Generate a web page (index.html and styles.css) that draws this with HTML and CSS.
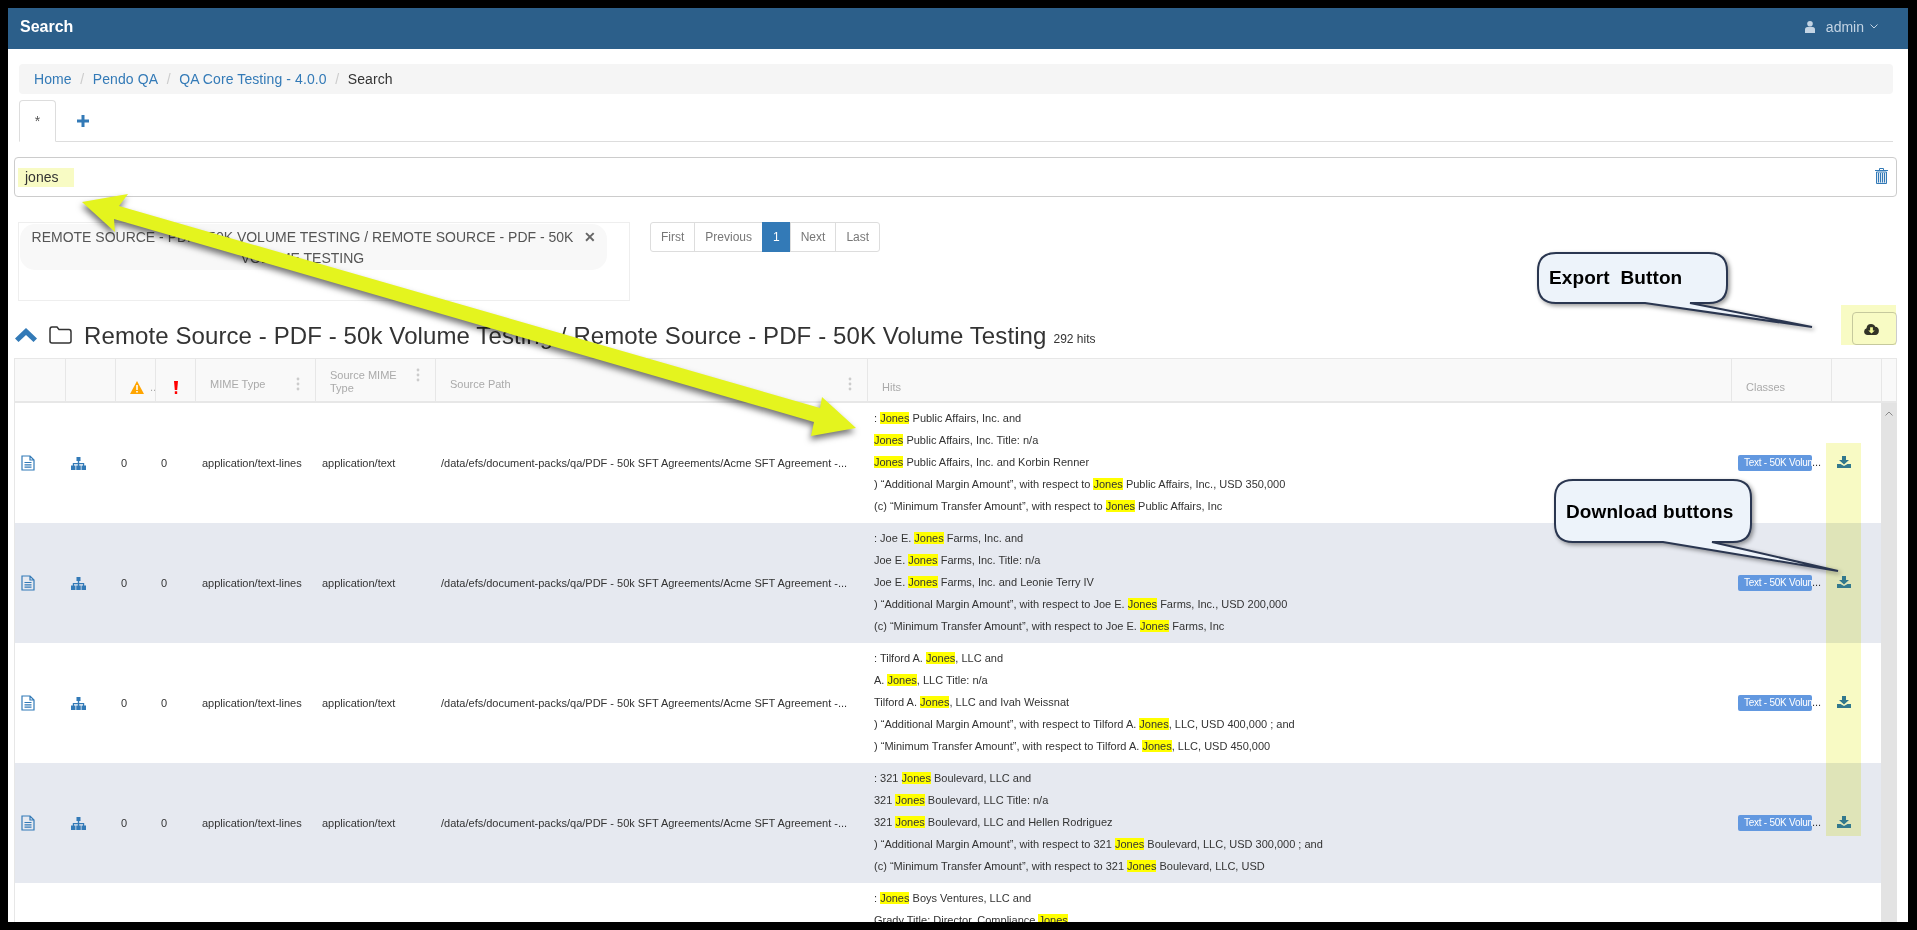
FILE: index.html
```html
<!DOCTYPE html>
<html lang="en">

<head>
    <meta charset="UTF-8">
    <title>Search</title>
    <link rel="stylesheet" href="styles.css">
</head>

<body>
    <svg class="defs" width="0" height="0">
        <defs>
            <symbol id="file" viewBox="0 0 14 16">
                <path d="M1 1h8l4 4v10H1z M9 1v4h4" fill="none" stroke="currentColor" stroke-width="1.2" />
                <path d="M3.500 7.500h7M3.500 9.800h7M3.500 12.100h7" fill="none" stroke="currentColor" stroke-width="1.2" />
            </symbol>
            <symbol id="sitemap" viewBox="0 0 15 13">
                <path d="M5.500 0h4v4h-1.300v2h5v3h-1.200V7.200H8.200V9H6.800V7.200H3V9H1.800V6h5V4H5.500z" fill="currentColor" />
                <path d="M0 8.500h4.500V13H0zM5.250 8.500h4.500V13h-4.500zM10.500 8.500H15V13h-4.500z" fill="currentColor" />
            </symbol>
            <symbol id="download" viewBox="0 0 14 12">
                <path d="M5 0h4v4h3L7 8.500 2 4h3z" fill="currentColor" />
                <path d="M0 8h3.500L7 10l3.500-2H14v4H0z" fill="currentColor" />
            </symbol>
            <symbol id="kebab" viewBox="0 0 4 14">
                <circle cx="2" cy="2" r="1.400" fill="#ccc" />
                <circle cx="2" cy="7" r="1.400" fill="#ccc" />
                <circle cx="2" cy="12" r="1.400" fill="#ccc" />
            </symbol>
        </defs>
    </svg>

    <div class="app">
        <header class="navbar">
            <span class="page-title">Search</span>
            <span class="user-menu">
                <svg class="icon-user" viewBox="0 0 10 12">
                    <circle cx="5" cy="2.800" r="2.800" fill="currentColor" />
                    <path d="M0 12V8.500Q0 6 2.500 6h5Q10 6 10 8.500V12z" fill="currentColor" />
                </svg>
                admin
                <svg class="icon-caret" viewBox="0 0 8 5">
                    <path d="M.5.500 4 4 7.500.500" fill="none" stroke="currentColor" />
                </svg>
            </span>
        </header>

        <ol class="breadcrumb">
            <li><a href="#">Home</a></li>
            <li><a href="#">Pendo QA</a></li>
            <li><a href="#">QA Core Testing - 4.0.0</a></li>
            <li class="active">Search</li>
        </ol>

        <div class="tabs">
            <span class="tab">*</span>
            <svg class="icon-plus" viewBox="0 0 12 12">
                <path d="M4.500 0h3v4.500H12v3H7.500V12h-3V7.500H0v-3h4.500z" fill="currentColor" />
            </svg>
        </div>

        <div class="search-box">
            <span class="search-term">jones</span>
            <svg class="icon-trash" viewBox="0 0 13 16">
                <path d="M4.500 2V.5h4V2M0 2.500h13" fill="none" stroke="#337ab7" />
                <path d="M1.500 4h10v11.500h-10z" fill="#dfe9f3" stroke="#337ab7" />
                <path d="M3.500 5v9.500M5.500 5v9.500M7.500 5v9.500M9.500 5v9.500" stroke="#337ab7" />
            </svg>
        </div>

        <div class="filters">
            <div class="facets">
                <div class="chip">
                    REMOTE SOURCE - PDF - 50K VOLUME TESTING / REMOTE SOURCE - PDF - 50K
                    VOLUME TESTING
                    <span class="chip-close">&#10005;</span>
                </div>
            </div>
            <ul class="pagination">
                <li>First</li>
                <li>Previous</li>
                <li class="current">1</li>
                <li>Next</li>
                <li>Last</li>
            </ul>
        </div>

        <div class="result-head">
            <svg class="icon-chevron" viewBox="0 0 22 14">
                <path d="M11 0 22 10.500 18.500 14 11 7 3.500 14 0 10.500z" fill="currentColor" />
            </svg>
            <svg class="icon-folder" viewBox="0 0 23 18">
                <path d="M1 3.500Q1 1 3 1h5l2 2.500h10Q22 3.500 22 6v9q0 2-2 2H3q-2 0-2-2z" fill="none" stroke="#333" stroke-width="1.500" />
            </svg>
            <h2>Remote Source - PDF - 50k Volume Testing / Remote Source - PDF - 50K Volume Testing</h2>
            <small>292 hits</small>
            <button class="export-btn">
                <svg viewBox="0 0 16 13">
                    <path d="M4 13Q0 13 0 9.300 0 6.500 2.600 5.800 3 1 7.500 1q3.500 0 4.500 3 4 .3 4 4.500 0 4.500-4 4.500z" fill="#333" />
                    <path d="M6.500 4.500h3V8h2L8 11.500 4.500 8h2z" fill="#f8fbc4" />
                </svg>
            </button>
        </div>

        <div class="grid">
            <table class="grid-table grid-header">
                <colgroup>
                    <col class="col-file"><col class="col-tree"><col class="col-num"><col class="col-num">
                    <col class="col-mime"><col class="col-mime"><col class="col-path"><col class="col-hits">
                    <col class="col-classes"><col class="col-dl"><col class="col-bar">
                </colgroup>
                <tr>
                    <th></th>
                    <th></th>
                    <th class="th-icon">
                        <svg class="icon-warn" viewBox="0 0 14 13">
                            <path d="M7 0 14 13H0z" fill="#ffa500" />
                            <path d="M6.200 4h1.600v5H6.200zM6.200 10h1.600v1.600H6.200z" fill="#fff" />
                        </svg>
                        <span class="dots">..</span>
                    </th>
                    <th class="th-icon">
                        <svg class="icon-excl" viewBox="0 0 4 13">
                            <path d="M0 0h4L3.200 9H.8zM.8 10.200h2.400V13H.8z" fill="#f00" />
                        </svg>
                    </th>
                    <th><span class="th-label">MIME Type</span><svg class="kebab"><use href="#kebab" /></svg></th>
                    <th><span class="th-label th-top">Source MIME Type</span><svg class="kebab kebab-top"><use href="#kebab" /></svg></th>
                    <th><span class="th-label">Source Path</span><svg class="kebab"><use href="#kebab" /></svg></th>
                    <th class="th-low">Hits</th>
                    <th class="th-low">Classes</th>
                    <th></th>
                    <th></th>
                </tr>
            </table>

            <div class="grid-body">
                <table class="grid-table">
                    <colgroup>
                        <col class="col-file"><col class="col-tree"><col class="col-num"><col class="col-num">
                        <col class="col-mime"><col class="col-mime"><col class="col-path"><col class="col-hits">
                        <col class="col-classes"><col class="col-dl">
                    </colgroup>
                    <tr>
                        <td><svg class="icon-file"><use href="#file" /></svg></td>
                        <td><svg class="icon-tree"><use href="#sitemap" /></svg></td>
                        <td>0</td>
                        <td>0</td>
                        <td>application/text-lines</td>
                        <td>application/text</td>
                        <td class="path">/data/efs/document-packs/qa/PDF - 50k SFT Agreements/Acme SFT Agreement -...</td>
                        <td class="hits">
                            <p>: <mark>Jones</mark> Public Affairs, Inc. and</p>
                            <p><mark>Jones</mark> Public Affairs, Inc. Title: n/a</p>
                            <p><mark>Jones</mark> Public Affairs, Inc. and Korbin Renner</p>
                            <p>) “Additional Margin Amount”, with respect to <mark>Jones</mark> Public Affairs, Inc., USD 350,000</p>
                            <p>(c) “Minimum Transfer Amount”, with respect to <mark>Jones</mark> Public Affairs, Inc</p>
                        </td>
                        <td class="classes"><span class="label">Text - 50K Volum</span>...</td>
                        <td><svg class="icon-dl"><use href="#download" /></svg></td>
                    </tr>
                    <tr>
                        <td><svg class="icon-file"><use href="#file" /></svg></td>
                        <td><svg class="icon-tree"><use href="#sitemap" /></svg></td>
                        <td>0</td>
                        <td>0</td>
                        <td>application/text-lines</td>
                        <td>application/text</td>
                        <td class="path">/data/efs/document-packs/qa/PDF - 50k SFT Agreements/Acme SFT Agreement -...</td>
                        <td class="hits">
                            <p>: Joe E. <mark>Jones</mark> Farms, Inc. and</p>
                            <p>Joe E. <mark>Jones</mark> Farms, Inc. Title: n/a</p>
                            <p>Joe E. <mark>Jones</mark> Farms, Inc. and Leonie Terry IV</p>
                            <p>) “Additional Margin Amount”, with respect to Joe E. <mark>Jones</mark> Farms, Inc., USD 200,000</p>
                            <p>(c) “Minimum Transfer Amount”, with respect to Joe E. <mark>Jones</mark> Farms, Inc</p>
                        </td>
                        <td class="classes"><span class="label">Text - 50K Volum</span>...</td>
                        <td><svg class="icon-dl"><use href="#download" /></svg></td>
                    </tr>
                    <tr>
                        <td><svg class="icon-file"><use href="#file" /></svg></td>
                        <td><svg class="icon-tree"><use href="#sitemap" /></svg></td>
                        <td>0</td>
                        <td>0</td>
                        <td>application/text-lines</td>
                        <td>application/text</td>
                        <td class="path">/data/efs/document-packs/qa/PDF - 50k SFT Agreements/Acme SFT Agreement -...</td>
                        <td class="hits">
                            <p>: Tilford A. <mark>Jones</mark>, LLC and</p>
                            <p>A. <mark>Jones</mark>, LLC Title: n/a</p>
                            <p>Tilford A. <mark>Jones</mark>, LLC and Ivah Weissnat</p>
                            <p>) “Additional Margin Amount”, with respect to Tilford A. <mark>Jones</mark>, LLC, USD 400,000 ; and</p>
                            <p>) “Minimum Transfer Amount”, with respect to Tilford A. <mark>Jones</mark>, LLC, USD 450,000</p>
                        </td>
                        <td class="classes"><span class="label">Text - 50K Volum</span>...</td>
                        <td><svg class="icon-dl"><use href="#download" /></svg></td>
                    </tr>
                    <tr>
                        <td><svg class="icon-file"><use href="#file" /></svg></td>
                        <td><svg class="icon-tree"><use href="#sitemap" /></svg></td>
                        <td>0</td>
                        <td>0</td>
                        <td>application/text-lines</td>
                        <td>application/text</td>
                        <td class="path">/data/efs/document-packs/qa/PDF - 50k SFT Agreements/Acme SFT Agreement -...</td>
                        <td class="hits">
                            <p>: 321 <mark>Jones</mark> Boulevard, LLC and</p>
                            <p>321 <mark>Jones</mark> Boulevard, LLC Title: n/a</p>
                            <p>321 <mark>Jones</mark> Boulevard, LLC and Hellen Rodriguez</p>
                            <p>) “Additional Margin Amount”, with respect to 321 <mark>Jones</mark> Boulevard, LLC, USD 300,000 ; and</p>
                            <p>(c) “Minimum Transfer Amount”, with respect to 321 <mark>Jones</mark> Boulevard, LLC, USD</p>
                        </td>
                        <td class="classes"><span class="label">Text - 50K Volum</span>...</td>
                        <td><svg class="icon-dl"><use href="#download" /></svg></td>
                    </tr>
                    <tr>
                        <td></td>
                        <td></td>
                        <td></td>
                        <td></td>
                        <td></td>
                        <td></td>
                        <td></td>
                        <td class="hits">
                            <p>: <mark>Jones</mark> Boys Ventures, LLC and</p>
                            <p>Grady Title: Director, Compliance <mark>Jones</mark></p>
                        </td>
                        <td></td>
                        <td></td>
                    </tr>
                </table>
                <div class="scrollbar">
                    <svg class="scroll-up" viewBox="0 0 8 5">
                        <path d="M.5 4.500 4 1l3.500 3.500" fill="none" stroke="#888" />
                    </svg>
                </div>
            </div>
        </div>

        <!-- annotations drawn on top of the screenshot -->
        <div class="mark-export"></div>
        <div class="mark-downloads"></div>
        <svg class="notes" viewBox="0 0 1917 930">
            <polygon class="arrow" points="82,202 128,194 119,206 820,408 822,397 856,428 811,436 814,422 114,219 115,232" />
            <path class="balloon" d="M1556 253H1709Q1727 253 1727 271V285Q1727 303 1709 303H1690L1812 327 1645 303H1556Q1538 303 1538 285V271Q1538 253 1556 253z" />
            <text class="balloon-text" x="1549" y="284">Export&#160;&#160;Button</text>
            <path class="balloon" d="M1573 480H1733Q1751 480 1751 498V524Q1751 542 1733 542H1712L1838 571 1663 542H1573Q1555 542 1555 524V498Q1555 480 1573 480z" />
            <text class="balloon-text" x="1566" y="518">Download buttons</text>
        </svg>
    </div>
</body>

</html>
```

FILE: styles.css
```css
* {
    box-sizing: border-box;
}

html,
body {
    margin: 0;
    height: 100%;
    overflow: hidden;
    background: #000;
}

body {
    padding: 8px 9px 8px 8px;
    font-family: "Liberation Sans", Arial, sans-serif;
    font-size: 14px;
    color: #333;
}

.defs {
    position: absolute;
}

.app {
    height: 914px;
    background: #fff;
    overflow: hidden;
}

/* top bar */
.navbar {
    display: flex;
    align-items: center;
    justify-content: space-between;
    height: 41px;
    padding: 0 30px 4px 12px;
    background: #2c5f8a;
}

.page-title {
    color: #fff;
    font-size: 16px;
    font-weight: bold;
}

.user-menu {
    display: flex;
    align-items: center;
    color: #c3d4e4;
    font-size: 14px;
}

.icon-user {
    width: 10px;
    height: 12px;
    margin-right: 11px;
}

.icon-caret {
    width: 8px;
    height: 5px;
    margin-left: 6px;
}

/* breadcrumb */
.breadcrumb {
    display: flex;
    align-items: center;
    height: 30px;
    margin: 15px 15px 0 11px;
    padding: 0 15px;
    list-style: none;
    letter-spacing: 0.1px;
    background: #f5f5f5;
    border-radius: 4px;
}

.breadcrumb li + li::before {
    content: "/";
    padding: 0 8.5px;
    color: #ccc;
}

.breadcrumb a {
    color: #337ab7;
    text-decoration: none;
}

/* tabs */
.tabs {
    display: flex;
    align-items: center;
    height: 42px;
    margin: 6px 15px 0 11px;
    border-bottom: 1px solid #ddd;
}

.tab {
    width: 37px;
    height: 42px;
    padding-top: 12px;
    text-align: center;
    color: #555;
    font-size: 14px;
    background: #fff;
    border: 1px solid #ddd;
    border-bottom-color: #fff;
    border-radius: 4px 4px 0 0;
}

.icon-plus {
    width: 12px;
    height: 12px;
    margin: 0 0 0 21px;
    color: #337ab7;
}

/* search box */
.search-box {
    display: flex;
    align-items: center;
    justify-content: space-between;
    height: 40px;
    margin: 15px 11px 0 6px;
    padding: 0 8px 0 3px;
    border: 1px solid #ccc;
    border-radius: 4px;
}

.search-term {
    width: 56px;
    height: 19px;
    padding-left: 7px;
    line-height: 18px;
    background: #f8fbc4;
}

.icon-trash {
    width: 13px;
    height: 16px;
    margin-bottom: 3px;
}

/* facets and pager */
.filters {
    display: flex;
    gap: 21px;
    margin: 25px 0 0 10px;
}

.facets {
    width: 612px;
    height: 79px;
    padding: 1px;
    border: 1px solid #eee;
}

.chip {
    position: relative;
    width: 587px;
    height: 46px;
    padding: 3px 32px 3px 10px;
    line-height: 21px;
    text-align: center;
    color: #555;
    background: #f8f8f8;
    border-radius: 15px;
}

.chip-close {
    position: absolute;
    right: 11px;
    top: 3px;
    font-weight: bold;
    color: #666;
}

.pagination {
    display: flex;
    height: 30px;
    margin: 0;
    padding: 0;
    list-style: none;
    font-size: 12px;
    line-height: 28px;
    color: #777;
}

.pagination li {
    padding: 0 10px;
    border: 1px solid #ddd;
    margin-left: -1px;
}

.pagination li:first-child {
    border-radius: 3px 0 0 3px;
}

.pagination li:last-child {
    border-radius: 0 3px 3px 0;
}

.pagination .current {
    color: #fff;
    background: #337ab7;
    border-color: #337ab7;
}

/* result heading */
.result-head {
    display: flex;
    align-items: center;
    height: 57px;
    margin: 0 11px 0 7px;
    padding-top: 11px;
}

.icon-chevron {
    width: 22px;
    height: 14px;
    color: #337ab7;
    margin-right: 12px;
}

.icon-folder {
    width: 23px;
    height: 18px;
    margin-right: 12px;
}

.result-head h2 {
    margin: 2px 0 0;
    font-size: 24px;
    font-weight: normal;
    letter-spacing: 0.1px;
}

.result-head small {
    margin: 8px 0 0 7px;
    font-size: 12px;
}

.export-btn {
    display: flex;
    align-items: center;
    justify-content: center;
    align-self: flex-start;
    width: 45px;
    height: 33px;
    margin-left: auto;
    padding: 0 6px 0 0;
    background: #fff;
    border: 1px solid #ccc;
    border-radius: 4px;
}

.export-btn svg {
    width: 15px;
    height: 12px;
}

/* results grid */
.grid {
    margin: 0 11px 0 6px;
}

.grid-table {
    width: 100%;
    table-layout: fixed;
    border-collapse: separate;
    border-spacing: 0;
    font-size: 11px;
}

.col-file { width: 51px; }
.col-tree { width: 50px; }
.col-num { width: 40px; }
.col-mime { width: 120px; }
.col-path { width: 432px; }
.col-hits { width: 864px; }
.col-classes { width: 100px; }
.col-dl { width: 50px; }
.col-bar { width: 16px; }

.grid-header th {
    position: relative;
    height: 45px;
    padding: 0 14px;
    text-align: left;
    font-weight: normal;
    color: #aaa;
    background: #f9f9f9;
    border: solid #e7e7e7;
    border-width: 1px 0 2px 1px;
    line-height: 13px;
}

.grid-header th:last-child {
    border-right-width: 1px;
}

.grid-header .th-low {
    padding-top: 15px;
}

.th-label {
    display: block;
    padding-right: 20px;
    margin-top: 8px;
}

.th-label.th-top {
    margin-top: 4px;
}

.th-icon {
    white-space: nowrap;
}

.icon-warn {
    width: 14px;
    height: 13px;
    vertical-align: -3px;
}

.dots {
    margin-left: 3px;
}

.icon-excl {
    width: 4px;
    height: 13px;
    vertical-align: -3px;
}

.grid-header .th-icon:nth-child(3) {
    padding: 14px 0 0 14px;
}

.grid-header .th-icon:nth-child(4) {
    padding: 14px 0 0 18px;
}

.kebab {
    position: absolute;
    right: 15px;
    top: 18px;
    width: 4px;
    height: 14px;
}

.kebab-top {
    top: 9px;
}

.grid-body {
    display: flex;
}

.grid-body .grid-table {
    flex: 1;
}

.grid-body tr {
    height: 120px;
}

.grid-body tr:nth-child(even) td {
    background: #e6e9f0;
}

.grid-body td {
    padding: 0 6px;
    color: #333;
    white-space: nowrap;
    overflow: hidden;
}

.grid-body td:first-child {
    border-left: 1px solid #e7e7e7;
}

.grid-body td:nth-child(5),
.grid-body td:nth-child(6),
.grid-body td.hits,
.grid-body td.classes {
    padding-left: 7px;
}

.grid-body td.hits {
    padding-top: 4px;
    vertical-align: top;
}

.hits p {
    height: 22px;
    margin: 0;
    line-height: 22px;
}

mark {
    background: #ff0;
    color: #333;
}

.label {
    display: inline-block;
    width: 74px;
    height: 16px;
    padding-left: 6px;
    overflow: hidden;
    color: #fff;
    font-size: 10px;
    letter-spacing: -0.25px;
    line-height: 16px;
    vertical-align: middle;
    background: #6298e0;
    border-radius: 2px;
}

.icon-file {
    display: block;
    width: 14px;
    height: 16px;
    color: #337ab7;
}

.icon-tree {
    display: block;
    width: 15px;
    height: 13px;
    color: #337ab7;
}

.icon-dl {
    display: block;
    width: 14px;
    height: 12px;
    margin-top: -2px;
    color: #337ab7;
}

.scrollbar {
    flex: 0 0 16px;
    background: #e3e3e3;
    height: 520px;
    text-align: center;
}

.scroll-up {
    width: 8px;
    height: 5px;
    margin-top: 7px;
}

/* annotations */
.mark-export {
    position: absolute;
    left: 1841px;
    top: 305px;
    width: 55px;
    height: 40px;
    background: #f8fbc4;
    mix-blend-mode: multiply;
}

.mark-downloads {
    position: absolute;
    left: 1826px;
    top: 443px;
    width: 35px;
    height: 393px;
    background: #f8fac4;
    mix-blend-mode: multiply;
}

.notes {
    position: absolute;
    left: 0;
    top: 0;
    width: 1917px;
    height: 930px;
    pointer-events: none;
}

.arrow {
    fill: #e4f41e;
    filter: drop-shadow(-1px 4px 3px rgba(0, 0, 0, 0.55));
}

.balloon {
    fill: #edf3fa;
    stroke: #2a3650;
    stroke-width: 2;
    filter: drop-shadow(2px 2px 2px rgba(0, 0, 0, 0.4));
}

.balloon-text {
    fill: #000;
    font-family: "Liberation Sans", Arial, sans-serif;
    font-size: 19px;
    font-weight: bold;
    letter-spacing: 0.1px;
}
```
